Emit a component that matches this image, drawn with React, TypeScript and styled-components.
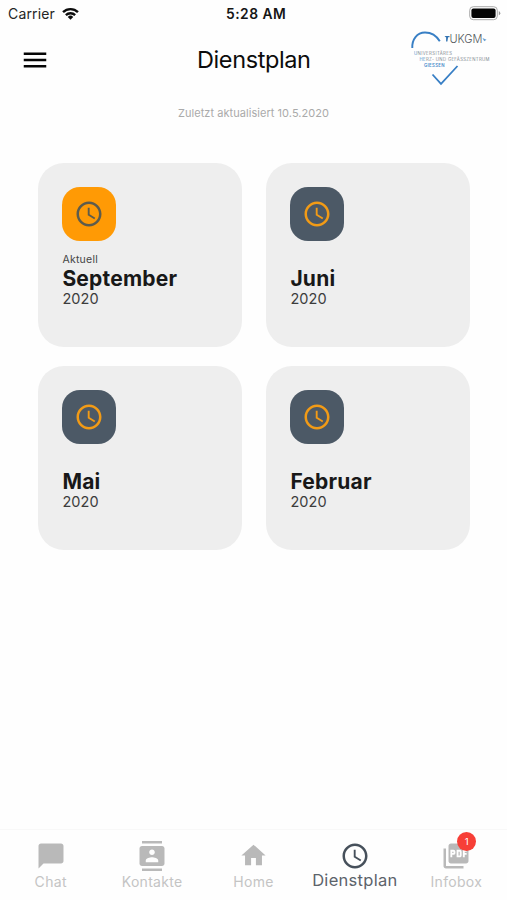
import React from "react";
import styled, { createGlobalStyle } from "styled-components";
import { MdAccessTime, MdChatBubble, MdContacts, MdHome, MdMenu, MdPictureAsPdf } from "react-icons/md";
import type { IconType } from "react-icons";

const GlobalStyle = createGlobalStyle`
  * { box-sizing: border-box; }
  body { margin: 0; background: #fefefe; font-family: Inter, "Liberation Sans", sans-serif; }
`;

const Screen = styled.div`
  width: 507px;
  height: 900px;
  display: flex;
  flex-direction: column;
  background: #fefefe;
  overflow: hidden;
`;

const StatusBar = styled.div`
  height: 28px;
  padding: 0 6px 0 8px;
  display: grid;
  grid-template-columns: 218px 1fr auto;
  align-items: center;
`;

const Carrier = styled.div`
  display: flex;
  align-items: center;
  gap: 7px;
  font-size: 14px;
  line-height: 28px;
  letter-spacing: 0.15px;
  color: #252525;
`;

const Time = styled.div`
  font-size: 13.8px;
  font-weight: 600;
  line-height: 28px;
  letter-spacing: 0.5px;
  color: #151515;
`;

const BatterySlot = styled.div`
  display: flex;
  justify-content: flex-end;
  padding-bottom: 1px;
`;

const Header = styled.header`
  height: 64px;
  padding: 0 15px 0 20px;
  display: grid;
  grid-template-columns: 177px 1fr auto;
  align-items: center;
`;

const MenuButton = styled.button`
  width: 30px;
  height: 30px;
  padding: 0;
  border: 0;
  background: none;
  color: #050505;
  svg { display: block; }
`;

const Title = styled.h1`
  margin: 0;
  font-size: 23.5px;
  font-weight: 400;
  line-height: 30px;
  letter-spacing: -0.4px;
  color: #0c0c0c;
`;

const LogoSlot = styled.div`
  display: flex;
  justify-content: flex-end;
  padding-bottom: 5px;
  svg { display: block; }
`;

const Updated = styled.p`
  margin: 13px 0 0;
  height: 57.5px;
  text-align: center;
  font-size: 11px;
  line-height: 16px;
  letter-spacing: 0.05px;
  color: #aaa;
`;

const Grid = styled.main`
  flex: 1;
  padding: 0 37px 0 38px;
  display: grid;
  grid-template-columns: 204px 204px;
  grid-auto-rows: 184.5px;
  gap: 18.5px 24px;
`;

const Card = styled.article`
  padding: 24px 24px 24px 24.4px;
  border-radius: 26px;
  background: #eee;
`;

const Tile = styled.div<{ $current: boolean }>`
  width: 54px;
  height: 54px;
  border-radius: 18px;
  display: grid;
  place-items: center;
  background: ${(p) => (p.$current ? "#ff9a05" : "#4c5966")};
  color: ${(p) => (p.$current ? "#5d5c4d" : "#f29b16")};
`;

const Tag = styled.div`
  height: 15px;
  margin-top: 11px;
  font-size: 10.5px;
  line-height: 15px;
  letter-spacing: 0.25px;
  color: #444;
`;

const Month = styled.h2`
  margin: 0;
  font-size: 21px;
  font-weight: 650;
  line-height: 23px;
  letter-spacing: 0.2px;
  color: #181818;
`;

const Year = styled.div`
  font-size: 14.5px;
  line-height: 18px;
  letter-spacing: 0.1px;
  color: #3c3c3c;
`;

const TabBar = styled.nav`
  height: 71px;
  display: grid;
  grid-template-columns: repeat(5, 1fr);
  border-top: 1px solid #f8f8f8;
`;

const Tab = styled.div<{ $active: boolean }>`
  display: flex;
  flex-direction: column;
  align-items: center;
  padding-top: 10.5px;
  color: ${(p) => (p.$active ? "#46505b" : "#b9b9b9")};
`;

const TabIcon = styled.div`
  position: relative;
  width: 30px;
  height: 30px;
  display: grid;
  place-items: center;
`;

const TabLabel = styled.span<{ $active: boolean }>`
  margin-top: ${(p) => (p.$active ? "-0.5px" : "1.5px")};
  font-size: ${(p) => (p.$active ? "16.5px" : "14px")};
  line-height: 20px;
  letter-spacing: 0.3px;
  color: ${(p) => (p.$active ? "#5c636a" : "#c4c4c4")};
`;

const Badge = styled.span`
  position: absolute;
  top: -8.5px;
  right: -5px;
  width: 19px;
  height: 19px;
  border-radius: 50%;
  background: #f73f37;
  color: #fff;
  font-size: 9.5px;
  line-height: 20px;
  text-align: center;
`;

const Wifi = () => (
  <svg width="17" height="14" viewBox="0 0 18 14" fill="none" stroke="#0c0c0c" strokeWidth="2.5">
    <path d="M1.1 5.1a11.2 11.2 0 0 1 15.8 0" />
    <path d="M4.1 8.2a7 7 0 0 1 9.8 0" />
    <path d="M9 13 6.1 10.1a4.1 4.1 0 0 1 5.8 0Z" fill="#0c0c0c" stroke="none" />
  </svg>
);

const Battery = () => (
  <svg width="32" height="15" viewBox="0 0 32 15">
    <rect x="0.7" y="0.7" width="27.6" height="13" rx="3.6" fill="#fff" stroke="#aaa" />
    <rect x="2.4" y="2.4" width="24.2" height="9.7" rx="2" fill="#050505" />
    <path d="M29.8 5.1q1.5.7 1.5 2.1t-1.5 2.1Z" fill="#999" />
  </svg>
);

const Logo = () => (
  <svg width="82" height="58" viewBox="410 29 82 58" fontFamily="Inter, sans-serif">
    <g fill="none" stroke="#387fc5">
      <path d="M412.3 48C411.8 39.5 417 32.500 425 32.500c6.500 0 11.500 3.300 14.800 8.800" strokeWidth="1.900" />
      <path d="M432.500 74.500 441 83.800 457.500 66" strokeWidth="1.800" />
    </g>
    <path d="M444.500 36h5v1.200h-1.400l-.7 4.300h-1.300V37.500Z" fill="#3474b3" />
    <path d="m482.500 38 4 1.700-2.300 1.500Z" fill="#68a0d2" />
    <text x="449.500" y="42.500" fontSize="11.800" fontWeight="300" fill="#53585c" textLength="33" lengthAdjust="spacingAndGlyphs">UKGM</text>
    <g fontSize="4.300" fill="#7f8890">
      <text x="414" y="55" textLength="38"><tspan fill="#4389c9">U</tspan>NIVERSITÄRES</text>
      <text x="419.500" y="61" textLength="70"><tspan fill="#4389c9">HE</tspan>RZ- UND GEFÄSSZENTRUM</text>
      <text x="424" y="67" textLength="20.500" fill="#4389c9" fontWeight="600">GIESSEN</text>
    </g>
  </svg>
);

const months = [
  { month: "September", year: 2020, current: true },
  { month: "Juni", year: 2020, current: false },
  { month: "Mai", year: 2020, current: false },
  { month: "Februar", year: 2020, current: false },
];

interface TabItem { label: string; Icon: IconType; size: number; active?: boolean; badge?: number }

const tabs: TabItem[] = [
  { label: "Chat", Icon: MdChatBubble, size: 30 },
  { label: "Kontakte", Icon: MdContacts, size: 30 },
  { label: "Home", Icon: MdHome, size: 29 },
  { label: "Dienstplan", Icon: MdAccessTime, size: 30, active: true },
  { label: "Infobox", Icon: MdPictureAsPdf, size: 30, badge: 1 },
];

export default function App() {
  return (
    <>
      <GlobalStyle />
      <Screen>
        <StatusBar>
          <Carrier>Carrier <Wifi /></Carrier>
          <Time>5:28 AM</Time>
          <BatterySlot><Battery /></BatterySlot>
        </StatusBar>
        <Header>
          <MenuButton aria-label="Menü"><MdMenu size={30} /></MenuButton>
          <Title>Dienstplan</Title>
          <LogoSlot><Logo /></LogoSlot>
        </Header>
        <Updated>Zuletzt aktualisiert 10.5.2020</Updated>
        <Grid>
          {months.map(({ month, year, current }) => (
            <Card key={month}>
              <Tile $current={current}><MdAccessTime size={30} /></Tile>
              <Tag>{current ? "Aktuell" : ""}</Tag>
              <Month>{month}</Month>
              <Year>{year}</Year>
            </Card>
          ))}
        </Grid>
        <TabBar>
          {tabs.map(({ label, Icon, size, active = false, badge }) => (
            <Tab key={label} $active={active}>
              <TabIcon>
                <Icon size={size} />
                {badge && <Badge>{badge}</Badge>}
              </TabIcon>
              <TabLabel $active={active}>{label}</TabLabel>
            </Tab>
          ))}
        </TabBar>
      </Screen>
    </>
  );
}
